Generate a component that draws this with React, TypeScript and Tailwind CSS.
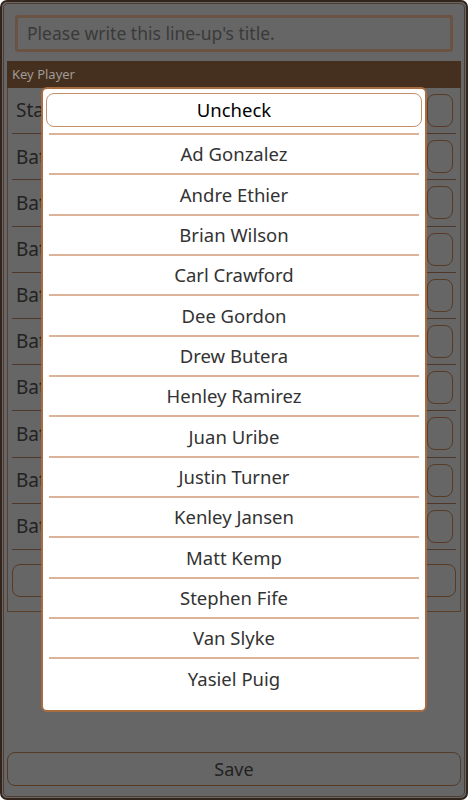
import React from 'react';

const players = [
  'Ad Gonzalez',
  'Andre Ethier',
  'Brian Wilson',
  'Carl Crawford',
  'Dee Gordon',
  'Drew Butera',
  'Henley Ramirez',
  'Juan Uribe',
  'Justin Turner',
  'Kenley Jansen',
  'Matt Kemp',
  'Stephen Fife',
  'Van Slyke',
  'Yasiel Puig',
];

const rows = ['Starting', ...Array(9).fill('Batter')];

const font = { fontFamily: '"Noto Sans", "Open Sans", sans-serif' };

function LineupRow({ label }: { label: string }) {
  return (
    <div className="flex items-center h-[46.2px] pl-[4px] pr-[3px] border-b border-[#4e3829] mx-[4px]">
      <span className="flex-1 text-[19px] text-[#222]">{label}</span>
      <div className="w-[26px] h-[33px] rounded-lg border-[1.5px] border-[#563a25]" />
    </div>
  );
}

export default function App() {
  return (
    <div className="relative w-[468px] h-[800px] overflow-hidden" style={font}>
      {/* background screen (dimmed) */}
      <div className="h-full rounded-[7px] border-2 border-[#33251b] bg-[#676767] p-px">
        <div className="h-full rounded-[5px] border border-[#4d3c30] bg-[#666] flex flex-col">
          <div className="px-[11px] pt-[11px]">
            <div className="h-[37px] rounded-[3px] border-[3px] border-[#6b5343] flex items-center px-[9px]">
              <span className="text-[17.5px] text-[#3a3a3a]">Please write this line-up's title.</span>
            </div>
          </div>

          <div className="mt-[9px] mx-[3px] h-[27px] bg-[#45301f] flex items-center px-[5px]">
            <span className="text-[13px] text-[#a09a96]">Key Player</span>
          </div>

          <div className="mx-[3px] h-[524px] border border-t-0 border-[#5a3f2a] flex flex-col">
            {rows.map((r, i) => (
              <LineupRow key={i} label={r} />
            ))}
            <div className="mt-[14px] mx-[4px] h-[33px] rounded-lg border-[1.5px] border-[#563a25]" />
          </div>

          <div className="flex-1" />

          <div className="mx-[3px] mb-[10px] h-[34px] rounded-lg border border-[#553a26] flex items-center justify-center">
            <span className="text-[18px] text-[#222]">Save</span>
          </div>
        </div>
      </div>

      {/* picker dialog */}
      <div className="absolute left-[41px] top-[87px] w-[386px] h-[625px] rounded-md border-2 border-[#a86c40] bg-white px-[3px] pt-[4px]">
        <div className="h-[34px] rounded-lg border-[1.5px] border-[#c4906c] flex items-center justify-center">
          <span className="text-[18.5px] text-black">Uncheck</span>
        </div>
        <div className="mt-[6px] px-[3px]">
          {players.map((p) => (
            <div
              key={p}
              className="h-[40.35px] border-t-2 border-[#dcb398] flex items-center justify-center"
            >
              <span className="text-[18.5px] text-[#333]">{p}</span>
            </div>
          ))}
        </div>
      </div>
    </div>
  );
}
